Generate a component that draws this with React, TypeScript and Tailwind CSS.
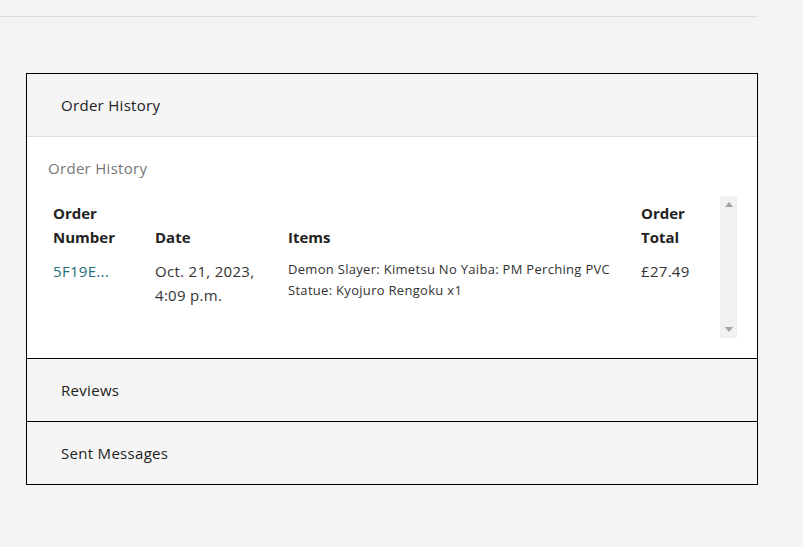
import React from "react";

export default function App() {
  const font = { fontFamily: '"Open Sans", "Noto Sans", sans-serif' };
  return (
    <div className="min-h-[547px] w-full bg-[#f3f3f3] tracking-[0.3px]" style={font}>
      <div className="h-[17px] w-[758px] border-b border-[#dcdcdc]" />
      <div className="ml-[26px] mt-[56px] w-[732px] border border-black bg-white">
        <div className="flex h-[63px] items-center border-b border-[#dedede] bg-[#f5f5f5] pl-[34px] text-[15px] text-[#222]">
          Order History
        </div>
        <div className="border-b border-black bg-white pb-[20px] pl-[21px] pr-[20px] pt-[20px]">
          <div className="text-[15px] leading-[22px] text-[#777]">Order History</div>
          <div className="mt-[17px] flex h-[142px]">
            <div className="w-[672px] overflow-hidden">
              <table className="w-full border-collapse text-left">
                <thead>
                  <tr className="align-bottom text-[15px] font-bold leading-[24px] tracking-normal text-[#222]">
                    <th className="w-[102px] p-[5px] font-bold">Order<br />Number</th>
                    <th className="w-[133px] p-[5px] font-bold">Date</th>
                    <th className="w-[353px] p-[5px] font-bold">Items</th>
                    <th className="p-[5px] font-bold">Order<br />Total</th>
                  </tr>
                </thead>
                <tbody>
                  <tr className="align-top text-[15px] leading-[24px] text-[#333]">
                    <td className="p-[5px] text-[#21707c]">5F19E...</td>
                    <td className="p-[5px]">Oct. 21, 2023,<br />4:09 p.m.</td>
                    <td className="p-[5px] text-[13px] leading-[21px]">
                      Demon Slayer: Kimetsu No Yaiba: PM Perching PVC Statue: Kyojuro Rengoku x1
                    </td>
                    <td className="p-[5px]">£27.49</td>
                  </tr>
                </tbody>
              </table>
            </div>
            <div className="flex w-[17px] flex-col items-center justify-between bg-[#f1f1f1] py-[6px]">
              <svg width="8" height="5" viewBox="0 0 8 5"><path d="M4 0L8 5H0Z" fill="#a3a3a3" /></svg>
              <svg width="8" height="5" viewBox="0 0 8 5"><path d="M0 0H8L4 5Z" fill="#a3a3a3" /></svg>
            </div>
          </div>
        </div>
        <div className="flex h-[63px] items-center border-b border-black bg-[#f5f5f5] pl-[34px] text-[15px] text-[#222]">
          Reviews
        </div>
        <div className="flex h-[62px] items-center bg-[#f5f5f5] pl-[34px] text-[15px] text-[#222]">
          Sent Messages
        </div>
      </div>
    </div>
  );
}
